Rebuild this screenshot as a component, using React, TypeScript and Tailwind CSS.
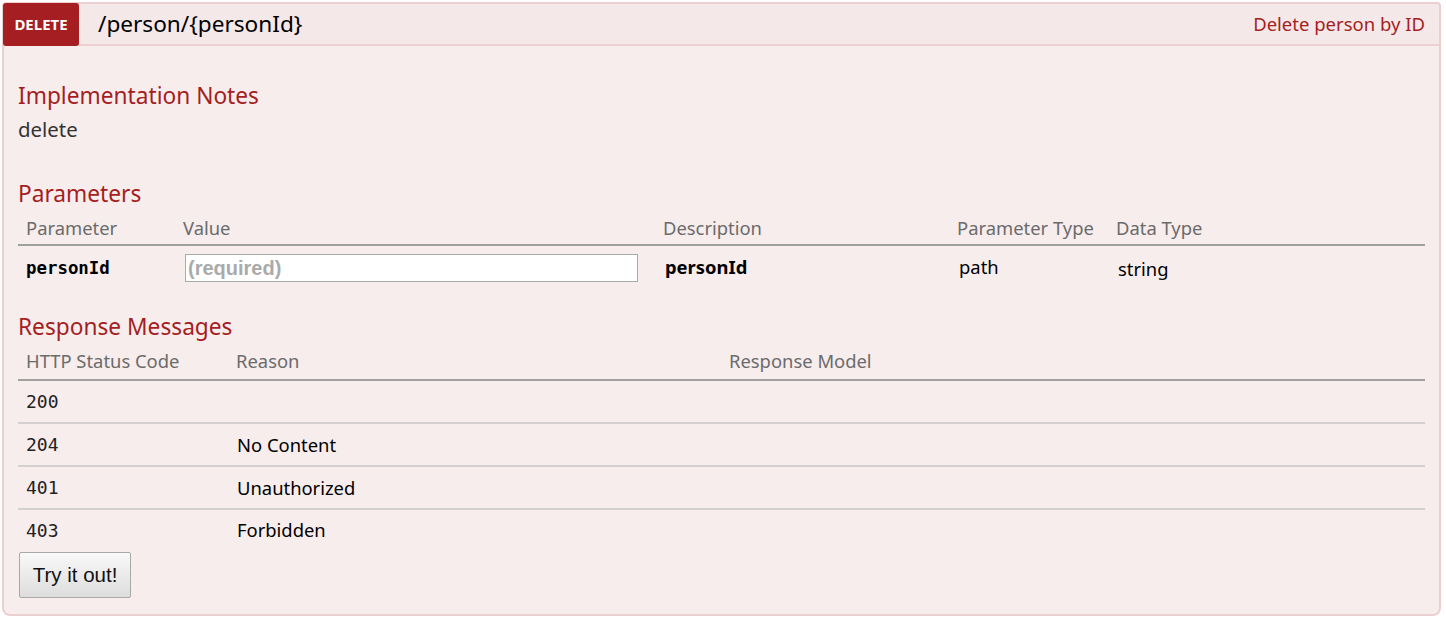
import React from 'react'

const sans = { fontFamily: '"Noto Sans", "Open Sans", sans-serif' }
const mono = { fontFamily: '"DejaVu Sans Mono", "Liberation Mono", monospace' }
const arial = { fontFamily: '"Liberation Sans", Arial, sans-serif' }

const params = [{ name: 'personId', description: 'personId', paramType: 'path', dataType: 'string' }]

const responses = [
  { code: '200', reason: '' },
  { code: '204', reason: 'No Content' },
  { code: '401', reason: 'Unauthorized' },
  { code: '403', reason: 'Forbidden' },
]

function SectionTitle({ children }: { children: React.ReactNode }) {
  return <h4 className="h-[30px] text-[22.7px] leading-[30px] text-[#a41e22]">{children}</h4>
}

export default function App() {
  return (
    <div className="min-h-[619px] bg-white pt-[2px] pl-[2px] pr-[5px]" style={sans}>
      <div className="flex h-[44px] items-stretch rounded-t-[4px] border-2 border-[#ecd0d1] bg-[#f5e8e8]">
        <span className="-ml-[1px] -mt-[1px] flex h-[43px] w-[76px] items-center justify-center rounded-[3px] bg-[#a41e22] text-[15px] font-bold text-white">
          DELETE
        </span>
        <span className="ml-[19px] flex items-center pb-[1px] text-[22.6px] text-black">/person/{'{personId}'}</span>
        <span className="ml-auto mr-[14px] flex items-center pb-[1px] text-[18.5px] text-[#a41e22]">
          Delete person by ID
        </span>
      </div>

      <div className="h-[570px] rounded-b-[8px] border-2 border-t-0 border-[#ecd0d1] bg-[#f7eded] px-[14px] pt-[35px]">
        <SectionTitle>Implementation Notes</SectionTitle>
        <p className="mt-[4px] h-[28px] text-[20.4px] leading-[28px] text-[#333]">delete</p>

        <div className="mt-[36px]">
          <SectionTitle>Parameters</SectionTitle>
        </div>
        <table className="w-full border-collapse text-left">
          <thead>
            <tr className="border-b-2 border-[#a0a0a0] text-[18.4px] leading-[26px] text-[#6b6b6b]">
              <th className="w-[165px] px-[8px] pb-[3px] pt-[6px] font-normal">Parameter</th>
              <th className="w-[480px] pb-[3px] pt-[6px] font-normal">Value</th>
              <th className="w-[294px] pb-[3px] pt-[6px] font-normal">Description</th>
              <th className="w-[159px] pb-[3px] pt-[6px] font-normal">Parameter Type</th>
              <th className="pb-[3px] pt-[6px] font-normal">Data Type</th>
            </tr>
          </thead>
          <tbody>
            {params.map((p) => (
              <tr key={p.name} className="h-[45px] text-[18.4px] text-black">
                <td className="px-[8px] text-[17.4px] font-bold" style={mono}>
                  {p.name}
                </td>
                <td className="pl-[2px]">
                  <input
                    placeholder="(required)"
                    className="block h-[28px] w-[453px] border border-[#aaa] bg-white px-[2px] text-[20px] font-bold placeholder:text-[#aaa]"
                    style={arial}
                  />
                </td>
                <td className="pl-[2px] pb-[2px] font-bold">{p.description}</td>
                <td className="pl-[2px] pb-[2px]">{p.paramType}</td>
                <td className="pl-[2px] pt-[2px]">{p.dataType}</td>
              </tr>
            ))}
          </tbody>
        </table>

        <div className="mt-[22px]">
          <SectionTitle>Response Messages</SectionTitle>
        </div>
        <table className="w-full border-collapse text-left">
          <thead>
            <tr className="border-b-2 border-[#a0a0a0] text-[18.4px] leading-[26px] text-[#6b6b6b]">
              <th className="w-[218px] px-[8px] pb-[5px] pt-[6px] font-normal">HTTP Status Code</th>
              <th className="w-[493px] pb-[5px] pt-[6px] font-normal">Reason</th>
              <th className="pb-[5px] pt-[6px] font-normal">Response Model</th>
            </tr>
          </thead>
          <tbody>
            {responses.map((r, i) => (
              <tr
                key={r.code}
                className={i < responses.length - 1 ? 'h-[43px] border-b-2 border-[#d2d0d0]' : 'h-[41px]'}
              >
                <td className="px-[8px] text-[18px] text-[#222]" style={mono}>
                  {r.code}
                </td>
                <td className="pl-[1px] text-[18.4px] text-black">{r.reason}</td>
                <td />
              </tr>
            ))}
          </tbody>
        </table>

        <button
          className="ml-[1px] mt-[2px] h-[46px] w-[112px] rounded-[2px] border border-[#a8a8a8] bg-gradient-to-b from-[#f9f9f9] to-[#dddddd] text-[20.5px] text-[#111]"
          style={arial}
        >
          Try it out!
        </button>
      </div>
    </div>
  )
}
